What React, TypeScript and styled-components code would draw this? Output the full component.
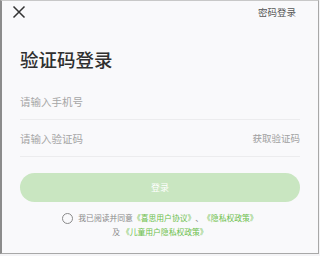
import React from "react";
import styled, { createGlobalStyle } from "styled-components";

const GlobalStyle = createGlobalStyle`
	html, body {
		margin: 0;
		padding: 0;
		background: #f4f4f6;
	}
	body {
		font-family: "Noto Sans CJK SC", "Noto Sans", sans-serif;
	}
`;

const Frame = styled.div`
	box-sizing: border-box;
	width: 319px;
	height: 254px;
	background: #f9f9fb;
	border-top: 1px solid #c8c8c8;
	border-left: 2px solid #8c8c8c;
	border-right: 1px solid #a8a8a8;
	border-bottom: 1px solid #a8a8a8;
	display: flex;
	flex-direction: column;
	overflow: hidden;
`;

const TopBar = styled.div`
	display: flex;
	align-items: center;
	justify-content: space-between;
	height: 22px;
	padding: 0 22px 0 10px;
`;

const CloseButton = styled.button`
	border: none;
	background: none;
	padding: 0;
	width: 14px;
	height: 14px;
	display: flex;
	align-items: center;
	justify-content: center;
`;

const SwitchLink = styled.span`
	font-size: 9.5px;
	color: #555;
`;

const Body = styled.div`
	display: flex;
	flex-direction: column;
	padding: 0 18px;
`;

const Title = styled.h1`
	margin: 22px 0 10px;
	font-size: 18.5px;
	font-weight: 500;
	color: #2f2f2f;
	line-height: 28px;
`;

const Field = styled.div`
	display: flex;
	align-items: center;
	justify-content: space-between;
	height: 36px;
	border-bottom: 1px solid #ececee;
`;

const Placeholder = styled.span`
	font-size: 10.5px;
	color: #a6a6a6;
`;

const CodeLink = styled.span`
	font-size: 9.5px;
	color: #a0a0a0;
`;

const LoginButton = styled.button`
	margin-top: 16px;
	height: 29px;
	border: none;
	border-radius: 15px;
	background: #c9e6c1;
	color: #ffffff;
	font-family: inherit;
	font-size: 9px;
`;

const Agreement = styled.div`
	display: flex;
	flex-direction: column;
	align-items: center;
	margin-top: 9px;
	font-size: 7.8px;
	line-height: 14px;
	color: #8a8a8a;
`;

const AgreeRow = styled.div`
	display: flex;
	align-items: center;
`;

const Radio = styled.span`
	box-sizing: border-box;
	width: 11px;
	height: 11px;
	border: 1px solid #8a8a8a;
	border-radius: 50%;
	margin-right: 5px;
`;

const Link = styled.span`
	color: #6cbf4b;
`;

export default function App() {
	return (
		<>
			<GlobalStyle />
			<Frame>
				<TopBar>
					<CloseButton>
						<svg width="14" height="14" viewBox="0 0 14 14">
							<path d="M1.5 1.5 L12.5 12.5 M12.5 1.5 L1.5 12.5" stroke="#333" strokeWidth="1.5" fill="none" />
						</svg>
					</CloseButton>
					<SwitchLink>密码登录</SwitchLink>
				</TopBar>
				<Body>
					<Title>验证码登录</Title>
					<Field>
						<Placeholder>请输入手机号</Placeholder>
					</Field>
					<Field>
						<Placeholder>请输入验证码</Placeholder>
						<CodeLink>获取验证码</CodeLink>
					</Field>
					<LoginButton>登录</LoginButton>
					<Agreement>
						<AgreeRow>
							<Radio />
							我已阅读并同意<Link>《喜思用户协议》</Link>、<Link>《隐私权政策》</Link>
						</AgreeRow>
						<div>
							及 <Link>《儿童用户隐私权政策》</Link>
						</div>
					</Agreement>
				</Body>
			</Frame>
		</>
	);
}
